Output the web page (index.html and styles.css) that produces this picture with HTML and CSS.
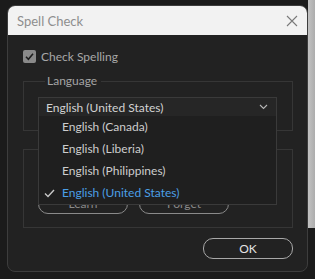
FILE: index.html
```html
<!DOCTYPE html>
<html>

<head>
    <title>Spell Check</title>
    <link rel="stylesheet" href="styles.css">
</head>

<body>
    <div class="dialog">
        <div class="titlebar">
            <span class="title">Spell Check</span>
            <svg class="close" width="12" height="12" viewBox="0 0 12 12">
                <path d="M1 1 L11 11 M11 1 L1 11" stroke="#7a7a7a" stroke-width="1.1" fill="none" />
            </svg>
        </div>
        <div class="content">
            <label class="check">
                <span class="box">
                    <svg width="13" height="13" viewBox="0 0 13 13">
                        <path d="M3 6.8 L5.4 9.2 L10 3.8" stroke="#1e1e1e" stroke-width="1.6" fill="none" />
                    </svg>
                </span>
                Check Spelling
            </label>

            <fieldset class="group">
                <legend>Language</legend>
                <div class="select">
                    <span>English (United States)</span>
                    <svg width="9" height="6" viewBox="0 0 9 6">
                        <path d="M1 1 L4.5 4.5 L8 1" stroke="#b5b5b5" stroke-width="1.1" fill="none" />
                    </svg>
                    <ul class="menu">
                        <li>English (Canada)</li>
                        <li>English (Liberia)</li>
                        <li>English (Philippines)</li>
                        <li class="selected">
                            <svg class="tick" width="11" height="9" viewBox="0 0 11 9">
                                <path d="M1 4.6 L4 7.5 L10 1" stroke="#c8c8c8" stroke-width="1.4" fill="none" />
                            </svg>
                            English (United States)
                        </li>
                    </ul>
                </div>
            </fieldset>

            <fieldset class="group dict">
                <legend>Dictionary</legend>
                <div class="buttons">
                    <button class="btn">Learn</button>
                    <button class="btn">Forget</button>
                </div>
            </fieldset>

            <div class="footer">
                <button class="btn ok">OK</button>
            </div>
        </div>
    </div>
</body>

</html>
```

FILE: styles.css
```css
body {
    margin: 0;
    width: 315px;
    height: 279px;
    overflow: hidden;
    font-family: Lato, "Noto Sans", sans-serif;
    background: linear-gradient(90deg, #1b1b1b 308px, #c2c2c2 308px, #adadad 315px) no-repeat;
    background-size: 315px 228px;
    background-color: #1b1b1b;
    padding: 5px 0 0 7px;
    box-sizing: border-box;
}

.dialog {
    width: 301px;
    height: 267px;
    box-sizing: border-box;
    background-color: #222222;
    border: 1px solid #3d3d3d;
    border-radius: 8px;
    overflow: hidden;
}

.titlebar {
    height: 29px;
    background-color: #f2f2f2;
    display: flex;
    align-items: center;
    justify-content: space-between;
    padding: 0 9px 0 9px;
}

.title {
    font-size: 13px;
    color: #8e8e8e;
}

.close {
    margin-top: 1px;
}

.content {
    padding: 15px 14px 0 15px;
}

.check {
    display: flex;
    align-items: center;
    gap: 5px;
    font-size: 12px;
    color: #a8a8a8;
    height: 13px;
}

.box {
    width: 13px;
    height: 13px;
    background-color: #8a8a8a;
    border-radius: 2px;
    display: flex;
}

.group {
    margin: 10px 0 0 0;
    border: 1px solid #363636;
    padding: 8px 15px 13px 14px;
    min-width: 0;
}

.group legend {
    font-size: 12px;
    line-height: 16px;
    color: #a5a5a5;
    padding: 0 4px 0 2px;
    margin-left: 7px;
}

.select {
    position: relative;
    height: 18px;
    background-color: #262626;
    border: 1px solid #3a3a3a;
    border-bottom-color: #444;
    display: flex;
    align-items: center;
    justify-content: space-between;
    padding: 0 8px 0 7px;
    font-size: 12px;
    color: #d2d2d2;
}

.menu {
    position: absolute;
    top: 18px;
    left: -1px;
    right: -1px;
    margin: 0;
    padding: 0;
    list-style: none;
    background-color: #1f1f1f;
    border: 1px solid #3a3a3a;
    border-top: none;
    z-index: 2;
}

.menu li {
    height: 22px;
    line-height: 22px;
    padding-left: 23px;
    color: #cdcdcd;
    position: relative;
}

.menu li.selected {
    color: #4b9fe6;
}

.tick {
    position: absolute;
    left: 5px;
    top: 7px;
}

.dict {
    padding-top: 36px;
}

.buttons {
    display: flex;
    gap: 11px;
}

.btn {
    width: 90px;
    height: 21px;
    box-sizing: border-box;
    background-color: transparent;
    border: 1.5px solid #8a8a8a;
    border-radius: 10px;
    font-family: Lato, "Noto Sans", sans-serif;
    font-size: 12px;
    color: #8a8a8a;
    padding: 0;
}

.footer {
    display: flex;
    justify-content: flex-end;
    margin-top: 10px;
}

.ok {
    border-color: #a8a8a8;
    color: #e2e2e2;
}
```
